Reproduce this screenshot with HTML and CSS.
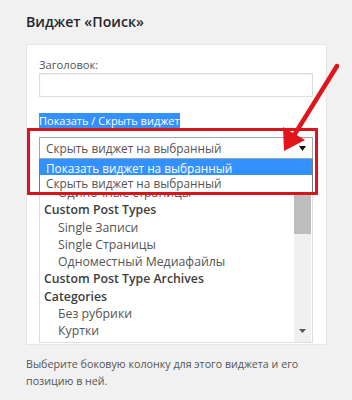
FILE: index.html
```html
<!DOCTYPE html>
<html lang="ru">
<head>
    <meta charset="UTF-8">
    <title>Виджет «Поиск»</title>
    <link rel="stylesheet" href="styles.css">
</head>
<body>

    <h3 class="widget-title">Виджет «Поиск»</h3>

    <div class="widget-card">
        <label class="field-label" for="title">Заголовок:</label>
        <input class="text-input" type="text" id="title">

        <div class="toggle-row"><span class="toggle-link">Показать / Скрыть виджет</span></div>

        <div class="select-wrap">
            <div class="select-box">
                <span>Скрыть виджет на выбранный</span>
                <svg class="select-arrow" width="7" height="5" viewBox="0 0 7 5"><path d="M0 0h7L3.5 5z" fill="#111"/></svg>
            </div>
            <ul class="select-menu">
                <li class="active">Показать виджет на выбранный</li>
                <li>Скрыть виджет на выбранный</li>
            </ul>
        </div>

        <div class="listbox">
            <ul class="list-items">
                <li class="sub">Одиночные страницы</li>
                <li class="group">Custom Post Types</li>
                <li class="sub">Single Записи</li>
                <li class="sub">Single Страницы</li>
                <li class="sub">Одноместный Медиафайлы</li>
                <li class="group">Custom Post Type Archives</li>
                <li class="group">Categories</li>
                <li class="sub">Без рубрики</li>
                <li class="sub">Куртки</li>
            </ul>
            <div class="scrollbar">
                <div class="thumb"></div>
                <svg class="scroll-down" width="7" height="4" viewBox="0 0 7 4"><path d="M0 0h7L3.5 4z" fill="#555"/></svg>
            </div>
        </div>

        <!-- red annotation frame -->
        <div class="callout"></div>
    </div>

    <p class="hint">Выберите боковую колонку для этого виджета и его позицию в ней.</p>

    <svg class="pointer" width="352" height="400" viewBox="0 0 352 400">
        <line x1="337" y1="66" x2="293" y2="137" stroke="#e0141b" stroke-width="4.5" stroke-linecap="round"/>
        <polygon points="284,151 283,127 305,140" fill="#e0141b"/>
    </svg>

</body>
</html>
```

FILE: styles.css
```css
body {
    font-family: "Open Sans", "Noto Sans", sans-serif;
    background-color: #f1f1f1;
    margin: 0;
    padding: 12px 25px 0 26px;
    color: #555;
}

.widget-title {
    font-size: 14.2px;
    font-weight: 600;
    line-height: 20px;
    color: #23282d;
    margin: 0 0 12px 0;
}

.widget-card {
    position: relative;
    width: 301px;
    box-sizing: border-box;
    background: #fff;
    border: 1px solid #e5e5e5;
    padding: 12px 13px 1px 12px;
}

.field-label {
    display: block;
    font-size: 11.2px;
    line-height: 16px;
    color: #555;
}

.text-input {
    display: block;
    width: 100%;
    height: 24px;
    box-sizing: border-box;
    margin: 0;
    border: 1px solid #ddd;
    box-shadow: inset 0 1px 2px rgba(0, 0, 0, 0.07);
    background: #fff;
}

.toggle-row {
    margin-top: 11px;
    height: 15px;
}

.toggle-link {
    display: inline-block;
    font-size: 11px;
    line-height: 15px;
    background: #3390ff;
    color: #fff;
}

.select-wrap {
    position: relative;
    margin-top: 14px;
}

.select-box {
    height: 22px;
    box-sizing: border-box;
    border: 1px solid #9aa6b4;
    padding: 0 6px;
    display: flex;
    align-items: center;
    justify-content: space-between;
    font-size: 11.8px;
    color: #555;
}

.select-menu {
    position: absolute;
    top: 100%;
    left: 0;
    right: 0;
    margin: 0;
    padding: 0;
    list-style: none;
    background: #fff;
    border: 1px solid #7a7a7a;
    border-top: none;
    z-index: 2;
}

.select-menu li {
    height: 17px;
    line-height: 17px;
    padding: 0 6px;
    font-size: 11.8px;
    color: #555;
}

.select-menu li.active {
    height: 16px;
    line-height: 18px;
    background: #3390ff;
    color: #fff;
}

.listbox {
    margin-top: 4px;
    height: 180px;
    box-sizing: border-box;
    border: 1px solid #ddd;
    display: flex;
    overflow: hidden;
}

.list-items {
    flex: 1;
    margin: 0;
    padding: 20px 0 0 4px;
    list-style: none;
    font-size: 12.3px;
    line-height: 17.3px;
}

.list-items .group {
    font-weight: 600;
    color: #3c3c3c;
}

.list-items .sub {
    padding-left: 14px;
    color: #555;
}

.scrollbar {
    width: 17px;
    margin-right: 1px;
    background: #f0f0f0;
    display: flex;
    flex-direction: column;
    align-items: center;
}

.thumb {
    width: 17px;
    height: 68px;
    margin-top: 2px;
    background: #bdbdbd;
}

.scroll-down {
    margin-top: auto;
    margin-bottom: 9px;
}

.callout {
    position: absolute;
    left: 0;
    top: 83px;
    width: 291px;
    height: 67px;
    box-sizing: border-box;
    border: 3px solid #d9141b;
    z-index: 3;
}

.hint {
    margin: 11px 0 0 0;
    font-size: 10.7px;
    line-height: 17px;
    color: #555;
}

.pointer {
    position: absolute;
    top: 0;
    left: 0;
    pointer-events: none;
    z-index: 5;
}
```
